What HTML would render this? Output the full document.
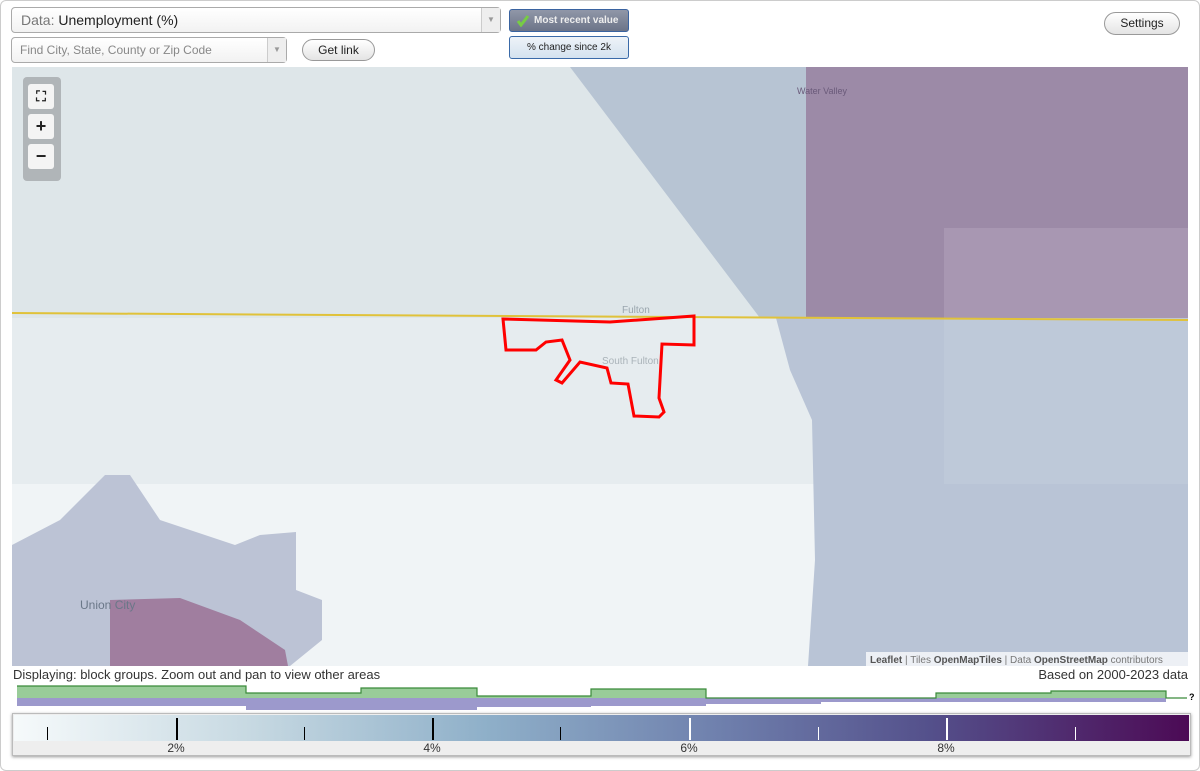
<!DOCTYPE html>
<html><head><style>
*{box-sizing:border-box}
body{margin:0;width:1200px;height:771px;background:#fff;font-family:"Liberation Sans",Arial,sans-serif;position:relative;overflow:hidden}
.frame{position:absolute;left:0;top:0;width:1200px;height:771px;border:1px solid #ccc;border-radius:6px}
.abs{position:absolute}
.sel{border:1px solid #aaa;border-radius:4px;background:linear-gradient(#fff,#f2f2f2)}
.arr{position:absolute;right:0;top:0;bottom:0;width:19px;border-left:1px solid #ccc;background:#eee;color:#999;font-size:8px;text-align:center}
.btn{border:1px solid #999;border-radius:12px;background:linear-gradient(#fff,#e4e4e4);font-size:12px;text-align:center;color:#222}
.zc{position:absolute;left:23px;top:77px;width:38px;height:104px;background:#b0b5b8;border-radius:4px}
.zb{position:absolute;left:5px;width:26px;height:25px;background:#f4f4f4;border-radius:3px;text-align:center;font-weight:bold;font-size:18px;line-height:24px;color:#222}
.tick{position:absolute;width:1px}
.lab{position:absolute;top:741px;font-size:12px;color:#333;width:40px;text-align:center}
</style></head><body>
<div class="frame"></div>
<div class="abs sel" style="left:11px;top:7px;width:490px;height:26px;font-size:14px;line-height:24px;padding-left:9px;color:#777">Data: <span style="color:#222">Unemployment (%)</span><div class="arr" style="line-height:24px">▼</div></div>
<div class="abs sel" style="left:11px;top:37px;width:276px;height:26px;font-size:12px;line-height:24px;padding-left:8px;color:#888">Find City, State, County or Zip Code<div class="arr" style="line-height:24px">▼</div></div>
<div class="abs btn" style="left:302px;top:39px;width:73px;height:22px;line-height:20px">Get link</div>
<div class="abs" style="left:509px;top:9px;width:120px;height:23px;border:1px solid #3a63a0;border-radius:3px;background:linear-gradient(#9097a8,#6c7488);color:#eee;font-size:10px;font-weight:bold;line-height:21px;padding-left:24px"><svg style="position:absolute;left:6px;top:4px" width="14" height="13"><path d="M2 7 L5 11 L12 2" stroke="#7c4" stroke-width="3" fill="none"/></svg>Most recent value</div>
<div class="abs" style="left:509px;top:36px;width:120px;height:23px;border:1px solid #3a6aa8;border-radius:3px;background:linear-gradient(#eef3f8,#d4e2ef);color:#222;font-size:10px;line-height:21px;text-align:center">% change since 2k</div>
<div class="abs btn" style="left:1104px;top:12px;width:76px;height:23px;line-height:21px">Settings</div>

<svg class="abs" style="left:12px;top:67px" width="1176" height="599" viewBox="12 67 1176 599">
<rect x="12" y="67" width="1176" height="599" fill="#f0f4f6"/>
<rect x="12" y="67" width="800" height="251" fill="#dee6e9"/>
<rect x="12" y="318" width="932" height="166" fill="#e6ecef"/>
<polygon points="570,67 806,67 806,318 760,318" fill="#b7c4d3"/>
<rect x="806" y="67" width="382" height="251" fill="#9c8aa7"/>
<rect x="944" y="228" width="244" height="90" fill="#a897b2"/>
<polygon points="776,318 1188,318 1188,666 808,666 815,560 812,420 790,370" fill="#b9c4d6"/>
<rect x="944" y="318" width="244" height="166" fill="#bec9d9"/>
<polygon points="12,545 60,520 105,475 130,475 160,520 235,545 260,535 296,532 296,590 322,600 322,640 290,666 12,666" fill="#bcc3d5"/>
<polygon points="110,600 180,598 240,620 285,650 288,666 110,666" fill="#a07e9f"/>
<line x1="12" y1="313" x2="1188" y2="320" stroke="#e0c23a" stroke-width="2"/>
<polygon points="503,319 610,322 694,316 694,345 662,344 659,398 664,412 659,417 634,416 628,384 611,383 607,368 580,362 562,383 556,380 570,360 562,340 546,342 536,350 506,350" fill="none" stroke="#ff0000" stroke-width="3"/>
<text x="622" y="313" font-size="10" fill="#9aa6ae">Fulton</text>
<text x="602" y="364" font-size="10" fill="#aab3b9">South Fulton</text>
<text x="797" y="94" font-size="9" fill="#6a5a7a">Water Valley</text>
<text x="80" y="609" font-size="12" fill="#6a7788">Union City</text>
<rect x="866" y="652" width="322" height="14" fill="rgba(255,255,255,0.75)"/>
<text x="870" y="663" font-size="10" fill="#777"><tspan font-weight="bold" fill="#555">Leaflet</tspan> | Tiles <tspan font-weight="bold" fill="#555">OpenMapTiles</tspan> | Data <tspan font-weight="bold" fill="#555">OpenStreetMap</tspan> contributors</text>
</svg>
<div class="zc"><div class="zb" style="top:7px;font-size:14px">⛶</div><div class="zb" style="top:37px">+</div><div class="zb" style="top:67px">−</div></div>

<div class="abs" style="left:13px;top:667px;font-size:13px;color:#333">Displaying: block groups. Zoom out and pan to view other areas</div>
<div class="abs" style="right:12px;top:667px;font-size:13px;color:#333">Based on 2000-2023 data</div>

<svg class="abs" style="left:0;top:680px" width="1200" height="34">
<g transform="translate(0,-680)">
<polygon points="17,698 17,706 246,706 246,710 477,710 477,707 591,707 591,706 706,706 706,704 821,704 821,702 1166,702 1166,698" fill="#9c99cc"/>
<polygon points="17,686 246,686 246,693 361,693 361,688 477,688 477,696 591,696 591,689 706,689 706,698 936,698 936,693 1051,693 1051,691 1166,691 1166,698 17,698" fill="#99cc99"/>
<polyline points="17,686 246,686 246,693 361,693 361,688 477,688 477,696 591,696 591,689 706,689 706,698 936,698 936,693 1051,693 1051,691 1166,691 1166,698 1187,698" fill="none" stroke="#3a8a3a" stroke-width="1.2"/>
<text x="1189" y="700" font-size="9" font-weight="bold">?</text>
</g></svg>

<div class="abs" style="left:12px;top:713px;width:1179px;height:43px;border:1px solid #bbb;box-shadow:0 1px 3px #999;background:#eee"></div>
<div class="abs" style="left:14px;top:715px;width:1175px;height:26px;background:linear-gradient(90deg,#f6fafb 0%,#c7d9e2 20%,#8fb0c9 40%,#6f80ad 60%,#54508b 78%,#4c0a55 100%)"></div>
<div class="tick" style="left:47px;top:727px;height:13px;background:#000"></div>
<div class="tick" style="left:176px;top:718px;height:22px;background:#000;width:2px"></div>
<div class="tick" style="left:304px;top:727px;height:13px;background:#000"></div>
<div class="tick" style="left:432px;top:718px;height:22px;background:#000;width:2px"></div>
<div class="tick" style="left:560px;top:727px;height:13px;background:#000"></div>
<div class="tick" style="left:689px;top:718px;height:22px;background:#fff;width:2px"></div>
<div class="tick" style="left:818px;top:727px;height:13px;background:#fff"></div>
<div class="tick" style="left:946px;top:718px;height:22px;background:#fff;width:2px"></div>
<div class="tick" style="left:1075px;top:727px;height:13px;background:#fff"></div>
<div class="lab" style="left:156px">2%</div>
<div class="lab" style="left:412px">4%</div>
<div class="lab" style="left:669px">6%</div>
<div class="lab" style="left:926px">8%</div>
</body></html>
